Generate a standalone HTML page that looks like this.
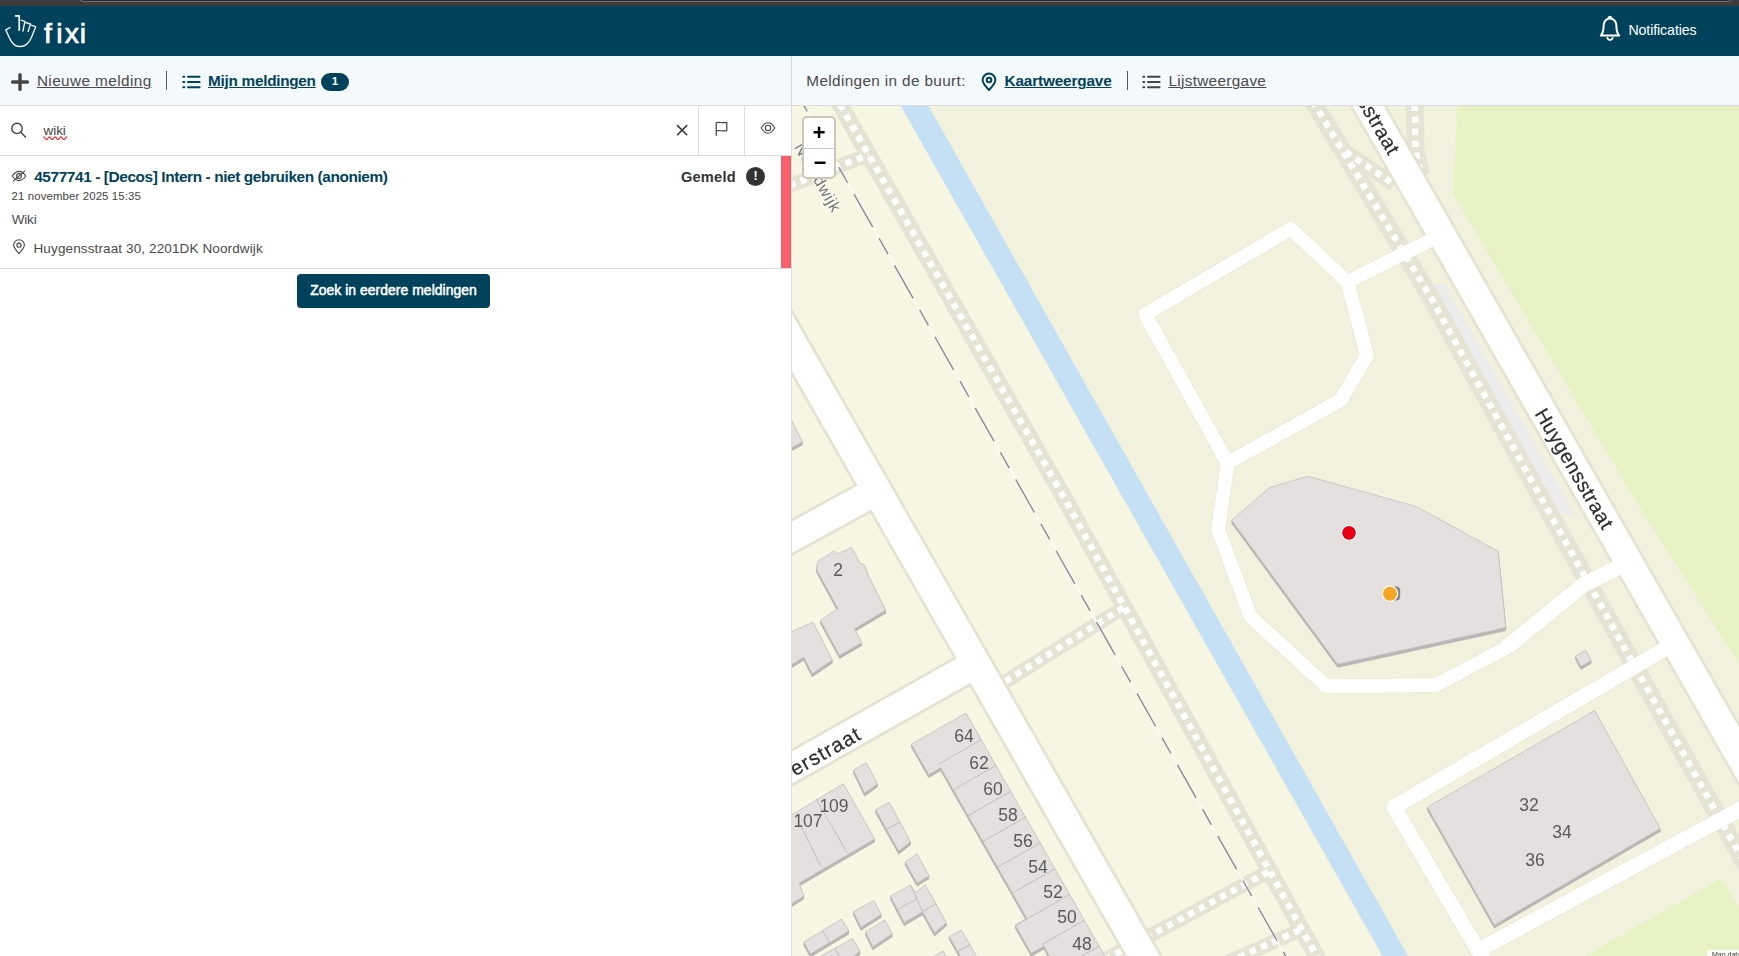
<!DOCTYPE html>
<html lang="nl">
<head>
<meta charset="utf-8">
<title>Fixi - Mijn meldingen</title>
<style>
*{box-sizing:border-box;margin:0;padding:0}
html,body{width:1739px;height:956px;overflow:hidden;background:#fff}
body{position:relative;font-family:"Liberation Sans",Arial,sans-serif;color:#444;-webkit-font-smoothing:antialiased}
.abs{position:absolute}
.t{position:absolute;white-space:nowrap;line-height:1}
svg{position:absolute;overflow:visible}
/* browser chrome strip */
#chrome{left:0;top:0;width:1739px;height:14px;background:#3c3c3c}
#chrome i{position:absolute;left:78px;top:-6px;width:1655px;height:8px;border:1.5px solid #6e6e6e;border-top:0;border-radius:0 0 6px 6px;background:#2b2b2b}
/* header */
#hdr{left:0;top:6px;width:1739px;height:50px;background:#00425c;border-top-left-radius:2px}
#sub{left:0;top:56px;width:1739px;height:50px;background:#f4f9fd;border-bottom:1px solid #dcdcdc}
#vdiv{left:791px;top:56px;width:1px;height:900px;background:#dcdcdc}
a{color:inherit}
.u{text-decoration:underline;text-decoration-thickness:1px;text-underline-offset:0.8px}
#left{left:0;top:106px;width:791px;height:850px;background:#fff}
.hl{position:absolute;left:0;width:791px;height:1px;background:#dcdcdc}
.vl{position:absolute;top:106px;width:1px;height:49px;background:#dcdcdc}
#btn{left:297px;top:274px;width:193px;height:34px;background:#00425c;border-radius:4px}
#map{left:792px;top:106px;width:947px;height:850px;overflow:hidden;background:#f2f0dd}
#map svg{left:0;top:0;filter:blur(0.55px)}
#zoom{left:802.2px;top:116px;width:33.6px;height:63.3px;border:2px solid #c9c8b8;border-radius:5px;background:#fff}
#zoom div{position:absolute;left:0;width:29.6px;text-align:center;font-weight:bold;font-size:22px;line-height:29px;color:#000;font-family:"Liberation Mono","DejaVu Sans Mono",monospace}
#attr{left:1707px;top:950px;width:40px;height:12px;background:rgba(255,255,255,.85);font-size:7px;line-height:9.5px;color:#333;padding-left:5px;white-space:nowrap;overflow:hidden}
</style>
</head>
<body>
<div class="abs" id="chrome"><i></i></div>

<div class="abs" id="hdr"></div>
<!-- logo -->
<svg width="60" height="56" viewBox="0 0 60 56" style="left:0;top:0" fill="none" stroke="#f2f6f8" stroke-width="1.35" stroke-linecap="butt" stroke-linejoin="miter">
  <path d="M10.5 27.4 L5.8 29.8 C7.5 34 9.5 38.5 11.5 41.6 C13.5 44.8 16.5 46.5 19.9 46.5 C23 46.5 25.5 45.5 27.2 43.7 C29.2 41.7 30.5 39.5 31.4 37.4 C32.8 34 34.5 30 35.6 26.7 L31.1 25.1"/>
  <path d="M14.9 15.8 H19.2 V30.7" stroke-width="1.7"/>
  <path d="M20.7 20.1 L24.9 21.4 L22.8 31.7 M25.6 22.5 L30.4 24 L28 32"/>
</svg>
<div class="t" style="left:43.9px;top:19.1px;font-size:28.4px;color:#fff;-webkit-text-stroke:0.7px #fff"><span style="letter-spacing:4.5px">f</span><span style="letter-spacing:2.2px">i</span><span style="letter-spacing:0.65px">x</span>i</div>

<!-- notifications -->
<svg width="26" height="30" viewBox="0 0 26 30" style="left:1597px;top:14px" fill="none" stroke="#fff" stroke-width="2" stroke-linecap="round" stroke-linejoin="round">
  <path d="M13 4.6 C8.6 4.6 6.6 8.2 6.6 12.2 C6.6 17 5.6 19.6 3.8 21.6 L22.2 21.6 C20.4 19.6 19.4 17 19.4 12.2 C19.4 8.2 17.4 4.6 13 4.6 Z"/>
  <path d="M11.6 3.6 A1.5 1.5 0 0 1 14.4 3.6"/>
  <path d="M10.4 24 A2.7 2.7 0 0 0 15.6 24"/>
</svg>
<div class="t" style="left:1628.4px;top:22.9px;font-size:14.2px;color:#fff;letter-spacing:-0.1px">Notificaties</div>

<div class="abs" id="sub"></div>
<div class="abs" id="vdiv"></div>

<!-- left tabs -->
<svg width="20" height="20" viewBox="0 0 20 20" style="left:10px;top:71.5px" fill="none" stroke="#444" stroke-width="3.4" stroke-linecap="round"><path d="M10 2.6 V17.4 M2.6 10 H17.4"/></svg>
<div class="t u" style="left:36.9px;top:73.2px;font-size:15.3px;color:#4a4a4a;letter-spacing:0.42px">Nieuwe melding</div>
<div class="abs" style="left:166px;top:71px;width:1px;height:19px;background:#555"></div>
<svg width="20" height="14" viewBox="0 0 20 14" style="left:182px;top:74.5px" fill="none" stroke="#00425c" stroke-width="2" stroke-linecap="round"><path d="M1.3 1.7 H2.3 M6 1.7 H17.6 M1.3 7 H2.3 M6 7 H17.6 M1.3 12.3 H2.3 M6 12.3 H17.6"/></svg>
<div class="t u" style="left:208.1px;top:73.2px;font-size:15.3px;font-weight:bold;color:#00425c;letter-spacing:-0.27px">Mijn meldingen</div>
<div class="abs" style="left:321px;top:73px;width:28px;height:18px;border-radius:9px;background:#00425c"></div>
<div class="t" style="left:321px;top:75.9px;width:28px;text-align:center;font-size:11.5px;font-weight:bold;color:#fff">1</div>

<!-- right tabs -->
<div class="t" style="left:806.3px;top:73.2px;font-size:15.3px;color:#4a4a4a;letter-spacing:0.37px">Meldingen in de buurt:</div>
<svg width="18" height="20" viewBox="0 0 18 20" style="left:979.5px;top:71.5px" fill="none" stroke="#00425c" stroke-width="2" stroke-linejoin="round"><path d="M9 18 C4.6 13.4 2.6 10.6 2.6 8 A6.4 6.4 0 0 1 15.4 8 C15.4 10.6 13.4 13.4 9 18 Z"/><circle cx="9" cy="8" r="2.3"/></svg>
<div class="t u" style="left:1004.6px;top:73.2px;font-size:15.3px;font-weight:bold;color:#00425c;letter-spacing:-0.15px">Kaartweergave</div>
<div class="abs" style="left:1127px;top:71px;width:1px;height:19px;background:#555"></div>
<svg width="20" height="14" viewBox="0 0 20 14" style="left:1142px;top:74.5px" fill="none" stroke="#444" stroke-width="2" stroke-linecap="round"><path d="M1.3 1.7 H2.3 M6 1.7 H17.6 M1.3 7 H2.3 M6 7 H17.6 M1.3 12.3 H2.3 M6 12.3 H17.6"/></svg>
<div class="t u" style="left:1168.4px;top:73.2px;font-size:15.3px;color:#4a4a4a;letter-spacing:0.33px">Lijstweergave</div>

<!-- left panel -->
<div class="abs" id="left"></div>
<svg width="20" height="20" viewBox="0 0 20 20" style="left:8px;top:119px" fill="none" stroke="#444" stroke-width="1.4" stroke-linecap="round"><circle cx="9" cy="9.4" r="5.2"/><path d="M12.8 13.2 L17.4 18"/></svg>
<div class="t" style="left:43.6px;top:123.9px;font-size:13.5px;color:#444;letter-spacing:-0.1px">wiki</div>
<svg width="40" height="12" viewBox="40 132 40 12" style="left:40px;top:132px" fill="none" stroke="#f21a1a" stroke-width="1.15" stroke-linecap="round"><path d="M43.70 136.90 C45.00 136.90 45.28 139.70 46.58 139.70 C47.88 139.70 48.15 136.90 49.45 136.90 C50.75 136.90 51.03 139.70 52.33 139.70 C53.62 139.70 53.90 136.90 55.20 136.90 C56.50 136.90 56.78 139.70 58.08 139.70 C59.38 139.70 59.65 136.90 60.95 136.90 C62.25 136.90 62.53 139.70 63.83 139.70 C65.12 139.70 65.40 136.90 66.70 136.90"/></svg>
<svg width="14" height="14" viewBox="0 0 14 14" style="left:675.3px;top:123.2px" fill="none" stroke="#333" stroke-width="1.5" stroke-linecap="round"><path d="M2.5 2.6 L11.7 11.8 M11.7 2.6 L2.5 11.8"/></svg>
<div class="vl" style="left:698px"></div>
<svg width="16" height="18" viewBox="0 0 16 18" style="left:713px;top:120px" fill="none" stroke="#444" stroke-width="1.2" stroke-linecap="round" stroke-linejoin="round"><path d="M3.2 15.4 V2.8 C6 1.6 8.5 3.4 13.8 2.4 V10.6 C9 11.6 6 9.8 3.2 11"/></svg>
<div class="vl" style="left:744px"></div>
<svg width="18" height="14" viewBox="0 0 18 14" style="left:759px;top:121px" fill="none" stroke="#444" stroke-width="1.1" stroke-linejoin="round"><path d="M2.2 7 C4.6 3.2 7 1.8 9 1.8 C11 1.8 13.4 3.2 15.8 7 C13.4 10.8 11 12.2 9 12.2 C7 12.2 4.6 10.8 2.2 7 Z"/><circle cx="9" cy="7" r="2.7"/></svg>
<div class="hl" style="top:155px"></div>

<!-- list item -->
<svg width="18" height="14" viewBox="0 0 18 14" style="left:9.5px;top:168.5px" fill="none" stroke="#444" stroke-width="1.1" stroke-linecap="round" stroke-linejoin="round"><path d="M2.2 7 C4.6 3.6 7 2.4 9 2.4 C11 2.4 13.4 3.6 15.8 7 C13.4 10.4 11 11.6 9 11.6 C7 11.6 4.6 10.4 2.2 7 Z"/><circle cx="9" cy="7" r="2.4"/><path d="M3.4 11.8 L14.6 2.2"/></svg>
<div class="t" style="left:34.2px;top:168.8px;font-size:15.4px;font-weight:bold;color:#00425c;letter-spacing:-0.4px">4577741 - [Decos] Intern - niet gebruiken (anoniem)</div>
<div class="t" style="left:11.5px;top:190.8px;font-size:11.4px;color:#444;letter-spacing:0.13px">21 november 2025 15:35</div>
<div class="t" style="left:11.7px;top:213px;font-size:13.5px;color:#4a4a4a;letter-spacing:-0.16px">Wiki</div>
<svg width="14" height="16" viewBox="0 0 14 16" style="left:11.5px;top:238.5px" fill="none" stroke="#444" stroke-width="1.1" stroke-linejoin="round"><path d="M7 14.6 C3.4 10.6 1.6 8.2 1.6 6.2 A5.4 5.4 0 0 1 12.4 6.2 C12.4 8.2 10.6 10.6 7 14.6 Z"/><circle cx="7" cy="6.2" r="2.1"/></svg>
<div class="t" style="left:33.5px;top:242px;font-size:13.5px;color:#4a4a4a;letter-spacing:0.125px">Huygensstraat 30, 2201DK Noordwijk</div>
<div class="t" style="left:680.9px;top:170.1px;font-size:14.6px;font-weight:bold;color:#333;letter-spacing:0.25px">Gemeld</div>
<div class="abs" style="left:746px;top:166.6px;width:19px;height:19px;border-radius:50%;background:#333"></div>
<div class="t" style="left:746px;top:170.1px;width:19px;text-align:center;font-size:12.5px;font-weight:bold;color:#fff">!</div>
<div class="abs" style="left:781px;top:156px;width:10px;height:112px;background:#f95f6b"></div>
<div class="hl" style="top:268px"></div>
<div class="abs" id="btn"></div>
<div class="t" style="left:297px;top:284.4px;width:193px;text-align:center;font-size:13.9px;color:#fff;letter-spacing:0.06px;-webkit-text-stroke:0.5px #fff">Zoek in eerdere meldingen</div>

<!-- map -->
<div class="abs" id="map">
<svg width="947" height="850" viewBox="792 106 947 850">
<rect x="780" y="95" width="980" height="880" fill="#f2f1de"/>
<polygon points="780.0,95.0 894.6,95.0 1392.0,975.0 780.0,975.0" fill="#f7f6e2"/>
<polygon points="1457.6,95.0 1453.4,194.4 1528.0,320.0 1647.4,520.0 1750.0,680.0 1750.0,95.0" fill="#e6f1c4"/>
<polygon points="1578.0,960.0 1721.9,878.0 1750.0,927.0 1750.0,965.0 1570.0,965.0" fill="#e6f1c4"/>
<polygon points="894.6,95.0 922.3,95.0 1419.4,976.0 1394.1,976.0" fill="#c5dff5"/>
<polygon points="1431.0,284.3 1445.0,284.9 1575.8,516.9 1560.0,513.5" fill="#ececec"/>
<polyline points="834.0,94.0 1065.4,500.0 1329.7,980.0" fill="none" stroke="#e5e4d4" stroke-width="17" stroke-linejoin="round"/>
<polyline points="780.0,189.2 868.5,154.7" fill="none" stroke="#e5e4d4" stroke-width="14.5" stroke-linejoin="round"/>
<polyline points="1005.5,681.3 1123.7,607.5" fill="none" stroke="#e5e4d4" stroke-width="14.5" stroke-linejoin="round"/>
<polyline points="1149.5,935.8 1271.0,870.3" fill="none" stroke="#e5e4d4" stroke-width="14.5" stroke-linejoin="round"/>
<polyline points="1121.0,951.0 1095.0,965.0" fill="none" stroke="#e5e4d4" stroke-width="14.5" stroke-linejoin="round"/>
<polyline points="1228.0,962.0 1304.0,928.3" fill="none" stroke="#e5e4d4" stroke-width="14.5" stroke-linejoin="round"/>
<polyline points="1308.6,94.0 1315.4,105.5 1432.2,300.0 1542.2,500.0 1659.1,710.0 1759.0,889.0" fill="none" stroke="#e5e4d4" stroke-width="18" stroke-linejoin="round"/>
<polyline points="1340.7,148.5 1394.0,184.2" fill="none" stroke="#e5e4d4" stroke-width="15" stroke-linejoin="round"/>
<polyline points="1414.5,94.0 1415.5,150.0 1421.0,175.0" fill="none" stroke="#e5e4d4" stroke-width="18" stroke-linejoin="round"/>
<polyline points="834.0,94.0 1065.4,500.0 1329.7,980.0" fill="none" stroke="#fff" stroke-width="6.4" stroke-dasharray="6.3 5.75" stroke-dashoffset="0"/>
<polyline points="780.0,189.2 868.5,154.7" fill="none" stroke="#fff" stroke-width="6.4" stroke-dasharray="6.3 5.75" stroke-dashoffset="2"/>
<polyline points="1005.5,681.3 1123.7,607.5" fill="none" stroke="#fff" stroke-width="6.4" stroke-dasharray="6.3 5.75" stroke-dashoffset="0"/>
<polyline points="1149.5,935.8 1271.0,870.3" fill="none" stroke="#fff" stroke-width="6.4" stroke-dasharray="6.3 5.75" stroke-dashoffset="4"/>
<polyline points="1121.0,951.0 1095.0,965.0" fill="none" stroke="#fff" stroke-width="6.4" stroke-dasharray="6.3 5.75" stroke-dashoffset="0"/>
<polyline points="1228.0,962.0 1304.0,928.3" fill="none" stroke="#fff" stroke-width="6.4" stroke-dasharray="6.3 5.75" stroke-dashoffset="0"/>
<polyline points="1308.6,94.0 1315.4,105.5 1432.2,300.0 1542.2,500.0 1659.1,710.0 1759.0,889.0" fill="none" stroke="#fff" stroke-width="6.4" stroke-dasharray="6.3 5.75" stroke-dashoffset="4"/>
<polyline points="1340.7,148.5 1394.0,184.2" fill="none" stroke="#fff" stroke-width="6.4" stroke-dasharray="6.3 5.75" stroke-dashoffset="6"/>
<polyline points="1414.5,94.0 1415.5,150.0 1421.0,175.0" fill="none" stroke="#fff" stroke-width="6.4" stroke-dasharray="6.3 5.75" stroke-dashoffset="1.5"/>
<polyline points="767.6,300.0 1162.9,990.0" fill="none" stroke="#e4e3d1" stroke-width="33.7" stroke-linejoin="round"/>
<polyline points="770.0,549.2 876.8,490.8" fill="none" stroke="#e4e3d1" stroke-width="33.0" stroke-linejoin="round"/>
<polyline points="770.0,779.9 985.0,658.7" fill="none" stroke="#e4e3d1" stroke-width="33.3" stroke-linejoin="round"/>
<polyline points="1359.0,90.0 1781.9,830.0" fill="none" stroke="#e4e3d1" stroke-width="32.5"/>
<polyline points="1232.0,460.6 1340.5,400.2 1367.0,355.4 1347.4,281.7 1290.6,228.8 1145.3,314.4 1227.6,463.1 1218.1,529.7 1250.7,616.8 1326.5,686.3 1435.6,685.2 1506.3,647.7 1520.0,636.6" fill="none" stroke="#e4e3d1" stroke-width="15.299999999999999" stroke-linejoin="round" opacity="0.55"/>
<polyline points="1506.3,647.7 1583.0,585.2 1615.2,569.0 1634.0,559.0" fill="none" stroke="#e4e3d1" stroke-width="17.1" stroke-linejoin="round" opacity="0.55"/>
<polyline points="1347.4,281.7 1428.0,241.4 1436.0,237.4" fill="none" stroke="#e4e3d1" stroke-width="15.0" stroke-linejoin="round" opacity="0.55"/>
<polyline points="1681.0,639.4 1662.3,650.4 1580.0,698.5 1393.9,807.1 1478.2,950.3 1739.0,809.8 1760.0,798.5" fill="none" stroke="#e4e3d1" stroke-width="16.6" stroke-linejoin="round" opacity="0.55"/>
<polyline points="1478.2,950.3 1492.0,974.0" fill="none" stroke="#e4e3d1" stroke-width="16.6" stroke-linejoin="round" opacity="0.55"/>
<polyline points="767.6,300.0 1162.9,990.0" fill="none" stroke="#fff" stroke-width="28.3" stroke-linejoin="round"/>
<polyline points="770.0,549.2 876.8,490.8" fill="none" stroke="#fff" stroke-width="27.6" stroke-linejoin="round"/>
<polyline points="770.0,779.9 985.0,658.7" fill="none" stroke="#fff" stroke-width="27.9" stroke-linejoin="round"/>
<polyline points="1359.0,90.0 1781.9,830.0" fill="none" stroke="#fff" stroke-width="27.1" stroke-linejoin="round"/>
<polyline points="1232.0,460.6 1340.5,400.2 1367.0,355.4 1347.4,281.7 1290.6,228.8 1145.3,314.4 1227.6,463.1 1218.1,529.7 1250.7,616.8 1326.5,686.3 1435.6,685.2 1506.3,647.7 1520.0,636.6" fill="none" stroke="#fff" stroke-width="13.7" stroke-linejoin="round"/>
<polyline points="1506.3,647.7 1583.0,585.2 1615.2,569.0 1634.0,559.0" fill="none" stroke="#fff" stroke-width="15.5" stroke-linejoin="round"/>
<polyline points="1347.4,281.7 1428.0,241.4 1436.0,237.4" fill="none" stroke="#fff" stroke-width="13.4" stroke-linejoin="round"/>
<polyline points="1681.0,639.4 1662.3,650.4 1580.0,698.5 1393.9,807.1 1478.2,950.3 1739.0,809.8 1760.0,798.5" fill="none" stroke="#fff" stroke-width="15" stroke-linejoin="round"/>
<polyline points="1478.2,950.3 1492.0,974.0" fill="none" stroke="#fff" stroke-width="15" stroke-linejoin="round"/>
<polyline points="797.3,94.0 1299.3,980.0" fill="none" stroke="#fcfbf2" stroke-width="2"/>
<polyline points="797.3,94.0 1299.3,980.0" fill="none" stroke="#8b869b" stroke-width="1.4" stroke-dasharray="38 13 18 13" stroke-dashoffset="49"/>
<polygon points="1231.7,523.2 1269.7,490.6 1307.8,479.2 1416.6,509.6 1498.2,554.5 1505.8,630.6 1337.7,667.3" fill="#b9b5b5" stroke="#b9b5b5" stroke-width="0.8"/>
<polygon points="1231.7,522.2 1269.7,489.6 1307.8,478.2 1416.6,508.6 1498.2,553.5 1505.8,629.6 1337.7,666.3" fill="#b9b5b5" stroke="#b9b5b5" stroke-width="0.8"/>
<polygon points="1231.7,521.2 1269.7,488.6 1307.8,477.2 1416.6,507.6 1498.2,552.5 1505.8,628.6 1337.7,665.3" fill="#b9b5b5" stroke="#b9b5b5" stroke-width="0.8"/>
<polygon points="1231.7,520.2 1269.7,487.6 1307.8,476.2 1416.6,506.6 1498.2,551.5 1505.8,627.6 1337.7,664.3" fill="#e4e0df" stroke="#c4c0bf" stroke-width="0.8"/>
<polygon points="1427.4,810.1 1594.7,713.7 1660.3,831.5 1494.3,927.9" fill="#b9b5b5" stroke="#b9b5b5" stroke-width="0.8"/>
<polygon points="1427.4,809.1 1594.7,712.7 1660.3,830.5 1494.3,926.9" fill="#b9b5b5" stroke="#b9b5b5" stroke-width="0.8"/>
<polygon points="1427.4,808.1 1594.7,711.7 1660.3,829.5 1494.3,925.9" fill="#b9b5b5" stroke="#b9b5b5" stroke-width="0.8"/>
<polygon points="1427.4,807.1 1594.7,710.7 1660.3,828.5 1494.3,924.9" fill="#e4e0df" stroke="#c4c0bf" stroke-width="0.8"/>
<polygon points="1575.5,659.2 1585.8,653.4 1591.2,663.4 1581.0,669.4" fill="#b9b5b5" stroke="#b9b5b5" stroke-width="0.8"/>
<polygon points="1575.5,658.2 1585.8,652.4 1591.2,662.4 1581.0,668.4" fill="#b9b5b5" stroke="#b9b5b5" stroke-width="0.8"/>
<polygon points="1575.5,657.2 1585.8,651.4 1591.2,661.4 1581.0,667.4" fill="#b9b5b5" stroke="#b9b5b5" stroke-width="0.8"/>
<polygon points="1575.5,656.2 1585.8,650.4 1591.2,660.4 1581.0,666.4" fill="#e4e0df" stroke="#c4c0bf" stroke-width="0.8"/>
<polygon points="817.6,564.4 834.2,553.9 836.4,557.1 851.7,550.6 860.0,566.3 864.6,568.1 868.3,578.2 885.8,613.2 854.5,631.7 861.8,645.5 839.7,658.4 820.4,623.4 837.9,611.4 816.7,572.7" fill="#b9b5b5" stroke="#b9b5b5" stroke-width="0.8"/>
<polygon points="817.6,563.4 834.2,552.9 836.4,556.1 851.7,549.6 860.0,565.3 864.6,567.1 868.3,577.2 885.8,612.2 854.5,630.7 861.8,644.5 839.7,657.4 820.4,622.4 837.9,610.4 816.7,571.7" fill="#b9b5b5" stroke="#b9b5b5" stroke-width="0.8"/>
<polygon points="817.6,562.4 834.2,551.9 836.4,555.1 851.7,548.6 860.0,564.3 864.6,566.1 868.3,576.2 885.8,611.2 854.5,629.7 861.8,643.5 839.7,656.4 820.4,621.4 837.9,609.4 816.7,570.7" fill="#b9b5b5" stroke="#b9b5b5" stroke-width="0.8"/>
<polygon points="817.6,561.4 834.2,550.9 836.4,554.1 851.7,547.6 860.0,563.3 864.6,565.1 868.3,575.2 885.8,610.2 854.5,628.7 861.8,642.5 839.7,655.4 820.4,620.4 837.9,608.4 816.7,569.7" fill="#e4e0df" stroke="#c4c0bf" stroke-width="0.8"/>
<polygon points="780.0,639.6 813.0,625.2 832.4,663.0 812.1,676.8 803.8,660.2 780.0,675.0" fill="#b9b5b5" stroke="#b9b5b5" stroke-width="0.8"/>
<polygon points="780.0,638.6 813.0,624.2 832.4,662.0 812.1,675.8 803.8,659.2 780.0,674.0" fill="#b9b5b5" stroke="#b9b5b5" stroke-width="0.8"/>
<polygon points="780.0,637.6 813.0,623.2 832.4,661.0 812.1,674.8 803.8,658.2 780.0,673.0" fill="#b9b5b5" stroke="#b9b5b5" stroke-width="0.8"/>
<polygon points="780.0,636.6 813.0,622.2 832.4,660.0 812.1,673.8 803.8,657.2 780.0,672.0" fill="#e4e0df" stroke="#c4c0bf" stroke-width="0.8"/>
<polygon points="775.0,390.0 802.4,445.0 775.0,459.5" fill="#b9b5b5" stroke="#b9b5b5" stroke-width="0.8"/>
<polygon points="775.0,389.0 802.4,444.0 775.0,458.5" fill="#b9b5b5" stroke="#b9b5b5" stroke-width="0.8"/>
<polygon points="775.0,388.0 802.4,443.0 775.0,457.5" fill="#b9b5b5" stroke="#b9b5b5" stroke-width="0.8"/>
<polygon points="775.0,387.0 802.4,442.0 775.0,456.5" fill="#e4e0df" stroke="#c4c0bf" stroke-width="0.8"/>
<polygon points="965.9,716.0 1114.8,976.5 1072.2,1000.8 1043.9,949.1 1031.3,956.3 1015.2,928.1 1026.9,921.4 940.7,770.7 928.7,777.6 911.4,747.2" fill="#b9b5b5" stroke="#b9b5b5" stroke-width="0.8"/>
<polygon points="965.9,715.0 1114.8,975.5 1072.2,999.8 1043.9,948.1 1031.3,955.3 1015.2,927.1 1026.9,920.4 940.7,769.7 928.7,776.6 911.4,746.2" fill="#b9b5b5" stroke="#b9b5b5" stroke-width="0.8"/>
<polygon points="965.9,714.0 1114.8,974.5 1072.2,998.8 1043.9,947.1 1031.3,954.3 1015.2,926.1 1026.9,919.4 940.7,768.7 928.7,775.6 911.4,745.2" fill="#b9b5b5" stroke="#b9b5b5" stroke-width="0.8"/>
<polygon points="965.9,713.0 1114.8,973.5 1072.2,997.8 1043.9,946.1 1031.3,953.3 1015.2,925.1 1026.9,918.4 940.7,767.7 928.7,774.6 911.4,744.2" fill="#e4e0df" stroke="#c4c0bf" stroke-width="0.8"/>
<polyline points="981.2,739.8 938.7,764.1" fill="none" stroke="#bdb9b8" stroke-width="0.9"/>
<polyline points="996.0,765.6 953.4,789.9" fill="none" stroke="#bdb9b8" stroke-width="0.9"/>
<polyline points="1010.7,791.4 968.2,815.7" fill="none" stroke="#bdb9b8" stroke-width="0.9"/>
<polyline points="1025.5,817.2 982.9,841.5" fill="none" stroke="#bdb9b8" stroke-width="0.9"/>
<polyline points="1040.2,843.0 997.6,867.3" fill="none" stroke="#bdb9b8" stroke-width="0.9"/>
<polyline points="1054.9,868.8 1012.4,893.1" fill="none" stroke="#bdb9b8" stroke-width="0.9"/>
<polyline points="1069.7,894.5 1015.4,925.6" fill="none" stroke="#bdb9b8" stroke-width="0.9"/>
<polyline points="1084.4,920.3 1041.9,944.6" fill="none" stroke="#bdb9b8" stroke-width="0.9"/>
<polyline points="1099.1,946.1 1056.6,970.4" fill="none" stroke="#bdb9b8" stroke-width="0.9"/>
<polygon points="780.0,825.0 843.4,786.7 874.7,841.9 799.2,886.1 803.8,899.0 780.0,914.0" fill="#b9b5b5" stroke="#b9b5b5" stroke-width="0.8"/>
<polygon points="780.0,824.0 843.4,785.7 874.7,840.9 799.2,885.1 803.8,898.0 780.0,913.0" fill="#b9b5b5" stroke="#b9b5b5" stroke-width="0.8"/>
<polygon points="780.0,823.0 843.4,784.7 874.7,839.9 799.2,884.1 803.8,897.0 780.0,912.0" fill="#b9b5b5" stroke="#b9b5b5" stroke-width="0.8"/>
<polygon points="780.0,822.0 843.4,783.7 874.7,838.9 799.2,883.1 803.8,896.0 780.0,911.0" fill="#e4e0df" stroke="#c4c0bf" stroke-width="0.8"/>
<polyline points="815.8,798.4 847.1,852.7" fill="none" stroke="#bdb9b8" stroke-width="0.9"/>
<polyline points="795.5,815.0 821.3,867.5" fill="none" stroke="#bdb9b8" stroke-width="0.9"/>
<polygon points="853.5,773.1 866.4,765.7 877.5,786.9 864.6,796.1" fill="#b9b5b5" stroke="#b9b5b5" stroke-width="0.8"/>
<polygon points="853.5,772.1 866.4,764.7 877.5,785.9 864.6,795.1" fill="#b9b5b5" stroke="#b9b5b5" stroke-width="0.8"/>
<polygon points="853.5,771.1 866.4,763.7 877.5,784.9 864.6,794.1" fill="#b9b5b5" stroke="#b9b5b5" stroke-width="0.8"/>
<polygon points="853.5,770.1 866.4,762.7 877.5,783.9 864.6,793.1" fill="#e4e0df" stroke="#c4c0bf" stroke-width="0.8"/>
<polygon points="875.6,812.7 889.4,805.3 910.6,844.9 898.7,854.1" fill="#b9b5b5" stroke="#b9b5b5" stroke-width="0.8"/>
<polygon points="875.6,811.7 889.4,804.3 910.6,843.9 898.7,853.1" fill="#b9b5b5" stroke="#b9b5b5" stroke-width="0.8"/>
<polygon points="875.6,810.7 889.4,803.3 910.6,842.9 898.7,852.1" fill="#b9b5b5" stroke="#b9b5b5" stroke-width="0.8"/>
<polygon points="875.6,809.7 889.4,802.3 910.6,841.9 898.7,851.1" fill="#e4e0df" stroke="#c4c0bf" stroke-width="0.8"/>
<polyline points="886.5,829.5 900.0,822.0" fill="none" stroke="#bdb9b8" stroke-width="0.9"/>
<polygon points="905.1,865.0 917.1,856.7 929.0,878.8 917.1,886.1" fill="#b9b5b5" stroke="#b9b5b5" stroke-width="0.8"/>
<polygon points="905.1,864.0 917.1,855.7 929.0,877.8 917.1,885.1" fill="#b9b5b5" stroke="#b9b5b5" stroke-width="0.8"/>
<polygon points="905.1,863.0 917.1,854.7 929.0,876.8 917.1,884.1" fill="#b9b5b5" stroke="#b9b5b5" stroke-width="0.8"/>
<polygon points="905.1,862.0 917.1,853.7 929.0,875.8 917.1,883.1" fill="#e4e0df" stroke="#c4c0bf" stroke-width="0.8"/>
<polygon points="890.4,899.0 910.6,888.0 915.2,895.3 925.4,888.0 946.5,925.7 934.6,935.9 922.6,914.7 904.2,925.7" fill="#b9b5b5" stroke="#b9b5b5" stroke-width="0.8"/>
<polygon points="890.4,898.0 910.6,887.0 915.2,894.3 925.4,887.0 946.5,924.7 934.6,934.9 922.6,913.7 904.2,924.7" fill="#b9b5b5" stroke="#b9b5b5" stroke-width="0.8"/>
<polygon points="890.4,897.0 910.6,886.0 915.2,893.3 925.4,886.0 946.5,923.7 934.6,933.9 922.6,912.7 904.2,923.7" fill="#b9b5b5" stroke="#b9b5b5" stroke-width="0.8"/>
<polygon points="890.4,896.0 910.6,885.0 915.2,892.3 925.4,885.0 946.5,922.7 934.6,932.9 922.6,911.7 904.2,922.7" fill="#e4e0df" stroke="#c4c0bf" stroke-width="0.8"/>
<polyline points="897.5,909.5 917.0,899.0" fill="none" stroke="#bdb9b8" stroke-width="0.9"/>
<polyline points="910.6,885.0 922.6,911.7" fill="none" stroke="#bdb9b8" stroke-width="0.9"/>
<polyline points="922.6,911.7 935.5,904.0" fill="none" stroke="#bdb9b8" stroke-width="0.9"/>
<polygon points="853.5,914.7 873.8,903.6 881.2,917.4 860.9,930.3" fill="#b9b5b5" stroke="#b9b5b5" stroke-width="0.8"/>
<polygon points="853.5,913.7 873.8,902.6 881.2,916.4 860.9,929.3" fill="#b9b5b5" stroke="#b9b5b5" stroke-width="0.8"/>
<polygon points="853.5,912.7 873.8,901.6 881.2,915.4 860.9,928.3" fill="#b9b5b5" stroke="#b9b5b5" stroke-width="0.8"/>
<polygon points="853.5,911.7 873.8,900.6 881.2,914.4 860.9,927.3" fill="#e4e0df" stroke="#c4c0bf" stroke-width="0.8"/>
<polygon points="865.5,934.9 884.8,923.0 892.2,936.8 872.9,949.7" fill="#b9b5b5" stroke="#b9b5b5" stroke-width="0.8"/>
<polygon points="865.5,933.9 884.8,922.0 892.2,935.8 872.9,948.7" fill="#b9b5b5" stroke="#b9b5b5" stroke-width="0.8"/>
<polygon points="865.5,932.9 884.8,921.0 892.2,934.8 872.9,947.7" fill="#b9b5b5" stroke="#b9b5b5" stroke-width="0.8"/>
<polygon points="865.5,931.9 884.8,920.0 892.2,933.8 872.9,946.7" fill="#e4e0df" stroke="#c4c0bf" stroke-width="0.8"/>
<polygon points="803.8,945.1 841.6,922.0 848.9,934.0 810.3,957.0" fill="#b9b5b5" stroke="#b9b5b5" stroke-width="0.8"/>
<polygon points="803.8,944.1 841.6,921.0 848.9,933.0 810.3,956.0" fill="#b9b5b5" stroke="#b9b5b5" stroke-width="0.8"/>
<polygon points="803.8,943.1 841.6,920.0 848.9,932.0 810.3,955.0" fill="#b9b5b5" stroke="#b9b5b5" stroke-width="0.8"/>
<polygon points="803.8,942.1 841.6,919.0 848.9,931.0 810.3,954.0" fill="#e4e0df" stroke="#c4c0bf" stroke-width="0.8"/>
<polyline points="822.5,930.5 829.5,942.5" fill="none" stroke="#bdb9b8" stroke-width="0.9"/>
<polygon points="817.6,961.0 852.6,941.4 860.0,954.3 848.0,963.0" fill="#b9b5b5" stroke="#b9b5b5" stroke-width="0.8"/>
<polygon points="817.6,960.0 852.6,940.4 860.0,953.3 848.0,962.0" fill="#b9b5b5" stroke="#b9b5b5" stroke-width="0.8"/>
<polygon points="817.6,959.0 852.6,939.4 860.0,952.3 848.0,961.0" fill="#b9b5b5" stroke="#b9b5b5" stroke-width="0.8"/>
<polygon points="817.6,958.0 852.6,938.4 860.0,951.3 848.0,960.0" fill="#e4e0df" stroke="#c4c0bf" stroke-width="0.8"/>
<polyline points="835.0,948.0 841.0,960.0" fill="none" stroke="#bdb9b8" stroke-width="0.9"/>
<polygon points="949.3,939.5 961.3,933.1 980.0,965.0 966.0,969.0" fill="#b9b5b5" stroke="#b9b5b5" stroke-width="0.8"/>
<polygon points="949.3,938.5 961.3,932.1 980.0,964.0 966.0,968.0" fill="#b9b5b5" stroke="#b9b5b5" stroke-width="0.8"/>
<polygon points="949.3,937.5 961.3,931.1 980.0,963.0 966.0,967.0" fill="#b9b5b5" stroke="#b9b5b5" stroke-width="0.8"/>
<polygon points="949.3,936.5 961.3,930.1 980.0,962.0 966.0,966.0" fill="#e4e0df" stroke="#c4c0bf" stroke-width="0.8"/>
<polyline points="958.0,951.5 970.0,945.0" fill="none" stroke="#bdb9b8" stroke-width="0.9"/>
<polygon points="928.0,960.0 943.0,951.0 950.0,962.0" fill="#e4e0df" stroke="#c4c0bf" stroke-width="0.8"/>
<text x="964.0" y="742.0" font-family="'Liberation Sans', Arial, sans-serif" font-size="17.5" text-anchor="middle" fill="#5a5a5a" stroke="#e4e0df" stroke-width="1.5" paint-order="stroke">64</text>
<text x="979.0" y="769.0" font-family="'Liberation Sans', Arial, sans-serif" font-size="17.5" text-anchor="middle" fill="#5a5a5a" stroke="#e4e0df" stroke-width="1.5" paint-order="stroke">62</text>
<text x="993.0" y="794.5" font-family="'Liberation Sans', Arial, sans-serif" font-size="17.5" text-anchor="middle" fill="#5a5a5a" stroke="#e4e0df" stroke-width="1.5" paint-order="stroke">60</text>
<text x="1008.0" y="820.5" font-family="'Liberation Sans', Arial, sans-serif" font-size="17.5" text-anchor="middle" fill="#5a5a5a" stroke="#e4e0df" stroke-width="1.5" paint-order="stroke">58</text>
<text x="1023.0" y="846.5" font-family="'Liberation Sans', Arial, sans-serif" font-size="17.5" text-anchor="middle" fill="#5a5a5a" stroke="#e4e0df" stroke-width="1.5" paint-order="stroke">56</text>
<text x="1038.0" y="872.5" font-family="'Liberation Sans', Arial, sans-serif" font-size="17.5" text-anchor="middle" fill="#5a5a5a" stroke="#e4e0df" stroke-width="1.5" paint-order="stroke">54</text>
<text x="1053.0" y="897.5" font-family="'Liberation Sans', Arial, sans-serif" font-size="17.5" text-anchor="middle" fill="#5a5a5a" stroke="#e4e0df" stroke-width="1.5" paint-order="stroke">52</text>
<text x="1067.0" y="922.5" font-family="'Liberation Sans', Arial, sans-serif" font-size="17.5" text-anchor="middle" fill="#5a5a5a" stroke="#e4e0df" stroke-width="1.5" paint-order="stroke">50</text>
<text x="1082.0" y="949.5" font-family="'Liberation Sans', Arial, sans-serif" font-size="17.5" text-anchor="middle" fill="#5a5a5a" stroke="#e4e0df" stroke-width="1.5" paint-order="stroke">48</text>
<text x="838.0" y="575.5" font-family="'Liberation Sans', Arial, sans-serif" font-size="17.5" text-anchor="middle" fill="#5a5a5a" stroke="#e4e0df" stroke-width="1.5" paint-order="stroke">2</text>
<text x="834.0" y="811.5" font-family="'Liberation Sans', Arial, sans-serif" font-size="17.5" text-anchor="middle" fill="#5a5a5a" stroke="#e4e0df" stroke-width="1.5" paint-order="stroke">109</text>
<text x="808.0" y="826.5" font-family="'Liberation Sans', Arial, sans-serif" font-size="17.5" text-anchor="middle" fill="#5a5a5a" stroke="#e4e0df" stroke-width="1.5" paint-order="stroke">107</text>
<text x="1529.0" y="810.5" font-family="'Liberation Sans', Arial, sans-serif" font-size="17.5" text-anchor="middle" fill="#5a5a5a" stroke="#e4e0df" stroke-width="1.5" paint-order="stroke">32</text>
<text x="1562.0" y="837.5" font-family="'Liberation Sans', Arial, sans-serif" font-size="17.5" text-anchor="middle" fill="#5a5a5a" stroke="#e4e0df" stroke-width="1.5" paint-order="stroke">34</text>
<text x="1535.0" y="865.5" font-family="'Liberation Sans', Arial, sans-serif" font-size="17.5" text-anchor="middle" fill="#5a5a5a" stroke="#e4e0df" stroke-width="1.5" paint-order="stroke">36</text>
<text x="1534.3" y="413.4" font-family="'Liberation Sans', Arial, sans-serif" font-size="20" text-anchor="start" fill="#fff" stroke="#fff" stroke-width="2" stroke-linejoin="round" textLength="135.5" transform="rotate(59.8 1534.3 413.4)">Huygensstraat</text>
<text x="1534.3" y="413.4" font-family="'Liberation Sans', Arial, sans-serif" font-size="20" text-anchor="start" fill="#2b2b2b" stroke="#2b2b2b" stroke-width="0.2" textLength="135.5" transform="rotate(59.8 1534.3 413.4)">Huygensstraat</text>
<text x="1388.5" y="156.0" font-family="'Liberation Sans', Arial, sans-serif" font-size="20" text-anchor="end" fill="#fff" stroke="#fff" stroke-width="2" stroke-linejoin="round" textLength="135.5" transform="rotate(60 1388.5 156.0)">Huygensstraat</text>
<text x="1388.5" y="156.0" font-family="'Liberation Sans', Arial, sans-serif" font-size="20" text-anchor="end" fill="#2b2b2b" stroke="#2b2b2b" stroke-width="0.2" textLength="135.5" transform="rotate(60 1388.5 156.0)">Huygensstraat</text>
<text x="862.0" y="738.7" font-family="'Liberation Sans', Arial, sans-serif" font-size="20.5" text-anchor="end" fill="#fff" stroke="#fff" stroke-width="2" stroke-linejoin="round" textLength="77" transform="rotate(-29.5 862.0 738.7)">erstraat</text>
<text x="862.0" y="738.7" font-family="'Liberation Sans', Arial, sans-serif" font-size="20.5" text-anchor="end" fill="#2b2b2b" stroke="#2b2b2b" stroke-width="0.2" textLength="77" transform="rotate(-29.5 862.0 738.7)">erstraat</text>
<text x="832.5" y="214.0" font-family="'Liberation Sans', Arial, sans-serif" font-size="16" text-anchor="end" fill="#fbfaee" stroke="#fbfaee" stroke-width="2.5" stroke-linejoin="round" letter-spacing="0.8" transform="rotate(60 832.5 214.0)">Noordwijk</text>
<text x="832.5" y="214.0" font-family="'Liberation Sans', Arial, sans-serif" font-size="16" text-anchor="end" fill="#74747a" stroke="#74747a" stroke-width="0" letter-spacing="0.8" transform="rotate(60 832.5 214.0)">Noordwijk</text>
<rect x="1385" y="586.6" width="15.2" height="14" rx="4" fill="#6a6a6a" opacity="0.75"/>
<circle cx="1390" cy="593.8" r="7.6" fill="#f5a623" stroke="#fff" stroke-width="1.2"/>
<circle cx="1349" cy="532.8" r="7.5" fill="#e60012" stroke="#fff" stroke-width="1.2"/>
</svg>
</div>
<div class="abs" id="zoom"><div style="top:2.4px">+</div><i style="position:absolute;left:0;top:29.5px;width:29.6px;height:1px;background:#ccc"></i><div style="top:31.6px;left:1px">&#8722;</div></div>
<div class="abs" id="attr">Map data</div>
</body>
</html>
